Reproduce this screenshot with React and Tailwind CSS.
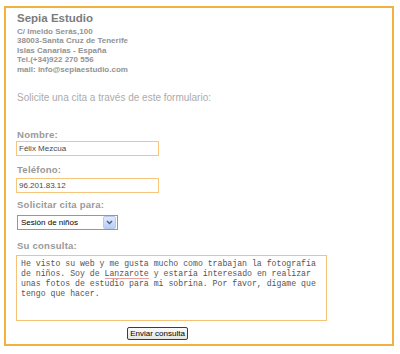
import React from "react";

const sans = { fontFamily: '"Liberation Sans", Arial, sans-serif' };
const mono = { fontFamily: '"Liberation Mono", "Courier New", monospace' };

const Label = ({ children, className = "" }) => (
  <div className={`text-[9.6px] leading-[12px] font-bold text-[#9a9a9a] tracking-[0.2px] ${className}`}>
    {children}
  </div>
);

const Field = ({ value, className = "" }) => (
  <div
    className={`ml-[-1px] w-[143px] h-[15px] border border-[#f5c67c] bg-white pl-[2px] text-[8px] leading-[13px] text-[#4a4a4a] ${className}`}
  >
    {value}
  </div>
);

export default function App() {
  return (
    <div className="w-[400px] h-[354px] bg-white pt-[6px] pl-[4px]" style={sans}>
      <div className="w-[390px] h-[340px] border-2 border-[#f2b240] pl-[11px] pt-[4px]">
        {/* studio header */}
        <div className="text-[11.5px] leading-[13px] font-bold text-[#7c7c7c]">Sepia Estudio</div>
        <div className="mt-[2px] text-[8px] leading-[9.4px] font-bold text-[#939393]">
          <div>C/ Imeldo Serás,100</div>
          <div>38003-Santa Cruz de Tenerife</div>
          <div>Islas Canarias - España</div>
          <div>Tel.(+34)922 270 556</div>
          <div>mail: info@sepiaestudio.com</div>
        </div>

        <div className="mt-[18px] text-[10px] leading-[12px] text-[#ababab]">
          Solicite una cita a través de este formulario:
        </div>

        {/* form */}
        <Label className="mt-[25px]">Nombre:</Label>
        <Field value="Félix Mezcua" />

        <Label className="mt-[8px]">Teléfono:</Label>
        <Field value="96.201.83.12" className="mt-[2px]" />

        <Label className="mt-[6px]">Solicitar cita para:</Label>
        <div className="mt-[4px] w-[101px] h-[15px] border border-[#7f9db9] bg-white flex items-center justify-between">
          <span className="pl-[3px] text-[8px] leading-[13px] text-black">Sesión de niños</span>
          <span className="w-[13px] h-[13px] mr-[1px] rounded-[2px] bg-gradient-to-b from-[#dfeafd] to-[#b9cdf6] border border-[#b6c9f0] flex items-center justify-center">
            <svg width="7" height="5" viewBox="0 0 7 5">
              <path d="M1 1 L3.5 3.5 L6 1" fill="none" stroke="#4d6185" strokeWidth="1.5" />
            </svg>
          </span>
        </div>

        <Label className="mt-[10px]">Su consulta:</Label>
        <div
          className="mt-[3px] ml-[-1px] w-[311px] h-[66px] border border-[#f5c378] bg-white pl-[4px] pt-[3px] text-[8.2px] leading-[10px] text-[#555]"
          style={mono}
        >
          <div>He visto su web y me gusta mucho como trabajan la fotografía</div>
          <div>
            de niños. Soy de{" "}
            <span className="relative">
              Lanzarote
              <span className="absolute left-0 right-0 bottom-[-1px] h-[1px] bg-[#e8a0a0]" />
            </span>{" "}
            y estaría interesado en realizar
          </div>
          <div>unas fotos de estudio para mi sobrina. Por favor, dígame que</div>
          <div>tengo que hacer.</div>
        </div>

        <div className="mt-[6px] ml-[110px] w-[61px] h-[13px] border border-[#3c3c3c] rounded-[2px] bg-gradient-to-b from-[#fafafa] to-[#e6e6e6] flex items-center justify-center text-[8px] leading-none text-black">
          Enviar consulta
        </div>
      </div>
    </div>
  );
}
